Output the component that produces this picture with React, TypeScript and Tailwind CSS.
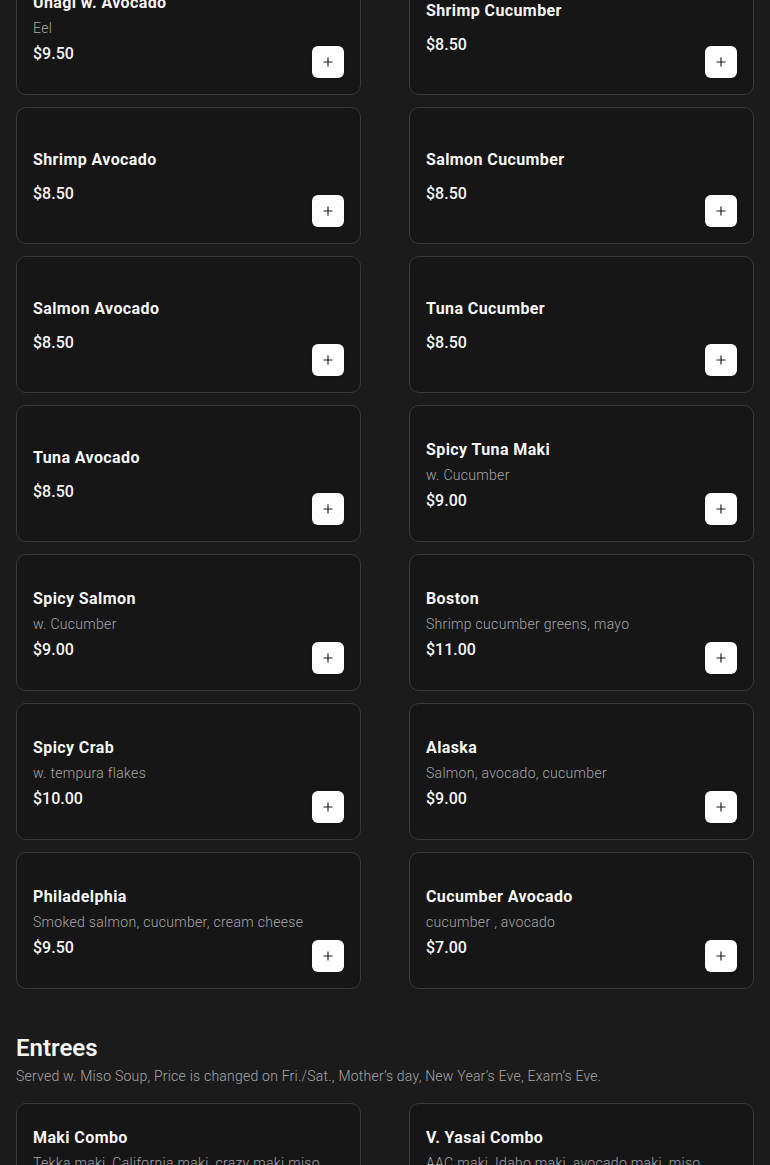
import { Plus } from 'lucide-react'

type Item = { name: string; desc?: string; price: string }

const rolls: Item[] = [
  { name: 'Unagi w. Avocado', desc: 'Eel', price: '$9.50' },
  { name: 'Shrimp Cucumber', price: '$8.50' },
  { name: 'Shrimp Avocado', price: '$8.50' },
  { name: 'Salmon Cucumber', price: '$8.50' },
  { name: 'Salmon Avocado', price: '$8.50' },
  { name: 'Tuna Cucumber', price: '$8.50' },
  { name: 'Tuna Avocado', price: '$8.50' },
  { name: 'Spicy Tuna Maki', desc: 'w. Cucumber', price: '$9.00' },
  { name: 'Spicy Salmon', desc: 'w. Cucumber', price: '$9.00' },
  { name: 'Boston', desc: 'Shrimp cucumber greens, mayo', price: '$11.00' },
  { name: 'Spicy Crab', desc: 'w. tempura flakes', price: '$10.00' },
  { name: 'Alaska', desc: 'Salmon, avocado, cucumber', price: '$9.00' },
  { name: 'Philadelphia', desc: 'Smoked salmon, cucumber, cream cheese', price: '$9.50' },
  { name: 'Cucumber Avocado', desc: 'cucumber , avocado', price: '$7.00' },
]

const entrees: Item[] = [
  { name: 'Maki Combo', desc: 'Tekka maki, California maki, crazy maki miso soup, salad', price: '$18.95' },
  { name: 'V. Yasai Combo', desc: 'AAC maki, Idaho maki, avocado maki, miso soup, salad', price: '$16.95' },
]

function MenuCard({ item }: { item: Item }) {
  return (
    <div className="relative flex min-h-[137px] items-center rounded-[10px] border border-[#3a3a3a] bg-[#161616] px-4 pb-[15px] pt-[18px]">
      <div className="flex flex-col pr-4">
        <h3 className="text-base font-bold leading-6 tracking-[0.025em] text-[#f5f5f5]">{item.name}</h3>
        {item.desc && <p className="mt-[3px] text-sm font-light leading-5 tracking-[0.022em] text-[#a8a8a8]">{item.desc}</p>}
        <p className={`${item.desc ? 'mt-1' : 'mt-2.5'} text-base font-medium leading-6 text-[#f5f5f5]`}>{item.price}</p>
      </div>
      <button className="absolute bottom-4 right-4 flex h-8 w-8 items-center justify-center rounded-md bg-white text-[#1a1a1a] shadow">
        <Plus size={14} strokeWidth={2} />
      </button>
    </div>
  )
}

export default function App() {
  return (
    <div className="min-h-screen overflow-hidden bg-[#1b1b1b] px-4 font-['Roboto',sans-serif]">
      <div className="-mt-[42px] grid grid-cols-2 gap-x-12 gap-y-3">
        {rolls.map((item) => <MenuCard key={item.name} item={item} />)}
      </div>

      {/* Entrees */}
      <section className="mt-[43px]">
        <h2 className="text-2xl font-semibold leading-8 text-[#f5f5f5]">Entrees</h2>
        <p className="mt-0.5 text-sm font-light leading-5 tracking-[0.016em] text-[#a8a8a8]">
          Served w. Miso Soup, Price is changed on Fri./Sat., Mother’s day, New Year’s Eve, Exam’s Eve.
        </p>
        <div className="mt-[17px] grid grid-cols-2 gap-x-12 gap-y-3">
          {entrees.map((item) => <MenuCard key={item.name} item={item} />)}
        </div>
      </section>
    </div>
  )
}
